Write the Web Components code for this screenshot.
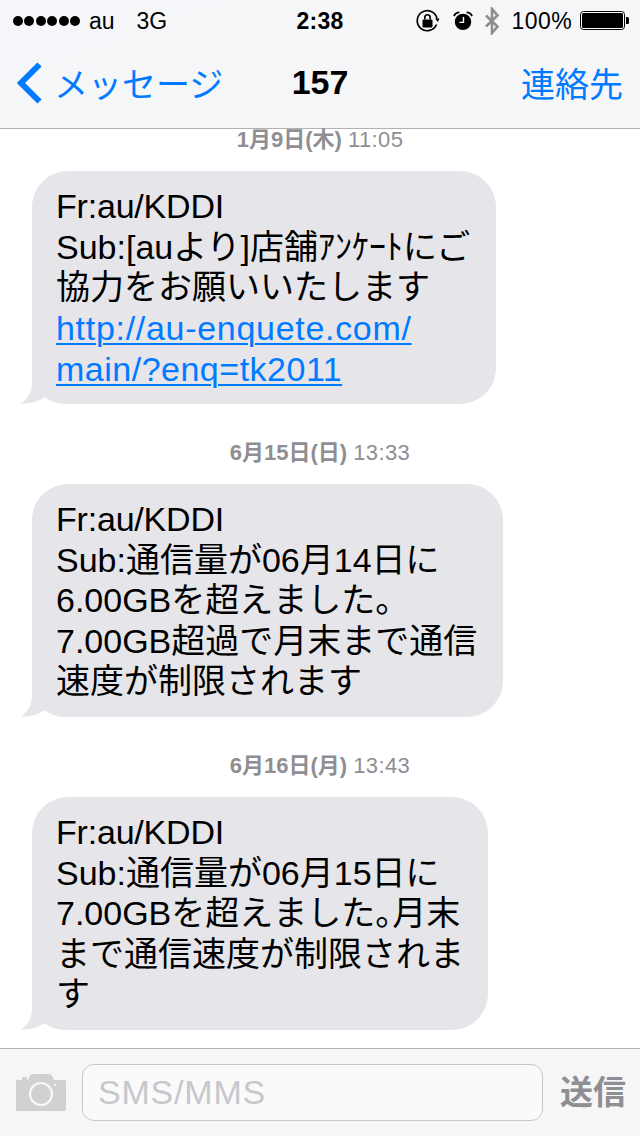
<!DOCTYPE html>
<html lang="ja">
<head>
<meta charset="utf-8">
<title>157</title>
<style>
  html, body { margin: 0; padding: 0; background: #fff; }
  body { width: 640px; height: 1136px; overflow: hidden; font-family: "Liberation Sans", "Noto Sans CJK JP", sans-serif; }
</style>
</head>
<body>
<sms-screen>
  <ios-status-bar slot="top"></ios-status-bar>
  <ios-nav-bar slot="top" back="メッセージ" heading="157" action="連絡先"></ios-nav-bar>

  <sms-stamp day="1月9日(木)" time="11:05"></sms-stamp>
  <sms-bubble style="--w:464px"><span style="letter-spacing:-.2px">Fr:au/KDDI</span><br>Sub:[auより]店舗ｱﾝｹｰﾄにご<br>協力をお願いいたします<br><a style="letter-spacing:.7px">http://au-enquete.com/</a><br><a style="letter-spacing:.5px">main/?enq=tk2011</a></sms-bubble>

  <sms-stamp day="6月15日(日)" time="13:33"></sms-stamp>
  <sms-bubble style="--w:471px"><span style="letter-spacing:-.2px">Fr:au/KDDI</span><br>Sub:通信量が06月14日に<br>6.00GBを超えました。<br>7.00GB超過で月末まで通信<br>速度が制限されます</sms-bubble>

  <sms-stamp day="6月16日(月)" time="13:43"></sms-stamp>
  <sms-bubble style="--w:456px"><span style="letter-spacing:-.2px">Fr:au/KDDI</span><br>Sub:通信量が06月15日に<br>7.00GBを超えました<span style="letter-spacing:-17px">。</span>月末<br>まで通信速度が制限されま<br>す</sms-bubble>

  <sms-composer slot="bottom" placeholder="SMS/MMS" send="送信"></sms-composer>
</sms-screen>

<script>
// page frame: bars on top, scroll area, composer at the bottom
class SmsScreen extends HTMLElement {
  constructor() {
    super();
    this.attachShadow({ mode: 'open' }).innerHTML = `
      <style>
        :host { display: flex; flex-direction: column; width: 640px; height: 1136px; }
        .top { flex: none; height: 128px; background: linear-gradient(160deg, #f5f6f9, #f7f7f8); border-bottom: 1px solid #b2b2b2; }
        .list { flex: 1; min-height: 0; margin-top: -1px; display: flex; flex-direction: column; overflow: hidden; }
      </style>
      <div class="top"><slot name="top"></slot></div>
      <div class="list"><slot></slot></div>
      <slot name="bottom"></slot>
    `;
  }
}

class IosStatusBar extends HTMLElement {
  constructor() {
    super();
    this.attachShadow({ mode: 'open' }).innerHTML = `
      <style>
        :host { display: flex; align-items: center; height: 42px; padding: 0 11px 0 13px; box-sizing: border-box; font-size: 23px; color: #000; position: relative; }
        .dots { display: flex; gap: 1.4px; margin-right: 9px; }
        .dots i { width: 10px; height: 10px; border-radius: 50%; background: #000; }
        .net { margin-left: 22px; }
        .time { position: absolute; left: 0; right: 0; text-align: center; font-weight: bold; letter-spacing: 0.2px; }
        .right { margin-left: auto; display: flex; align-items: center; }
        svg { display: block; }
      </style>
      <span class="dots"><i></i><i></i><i></i><i></i><i></i><i></i></span>
      <span>au</span><span class="net">3G</span>
      <span class="time">2:38</span>
      <span class="right">
        <svg width="24" height="24" viewBox="0 0 24 24" style="margin-right:13px">
          <path d="M20.500 15.500A10 10 0 1 1 21 9.500" fill="none" stroke="#000" stroke-width="1.700"/>
          <path d="M19 9.500l4.500 0-1.600 3.600z" fill="#000"/>
          <rect x="6.500" y="10.500" width="10" height="8" rx="1" fill="#000"/>
          <path d="M8.800 10.500V8.500a2.700 2.700 0 0 1 5.400 0v2" fill="none" stroke="#000" stroke-width="1.600"/>
        </svg>
        <svg width="20" height="20" viewBox="0 0 22 22" style="margin-right:11px">
          <circle cx="11" cy="12" r="9" fill="#000"/>
          <path d="M11.500 6.500v6H7" fill="none" stroke="#fff" stroke-width="1.600"/>
          <path d="M1 5.500Q3 1.500 7 1.500M21 5.500Q19 1.500 15 1.500" fill="none" stroke="#000" stroke-width="2"/>
        </svg>
        <svg width="16" height="28" viewBox="0 0 16 28" style="margin-right:12px">
          <path d="M2 8.500L13.500 19.500 8 26V2l5.500 6.500L2 19.500" fill="none" stroke="#8e8e8e" stroke-width="2.600"/>
        </svg>
        <span style="letter-spacing:.4px">100%</span>
        <svg width="49" height="20" viewBox="0 0 49 20" style="margin-left:8px">
          <rect x="0.500" y="0.500" width="44" height="18" rx="3" fill="#fff" stroke="#000"/>
          <rect x="2" y="2" width="41" height="15" rx="1.500" fill="#000"/>
          <path d="M46 6h1.500a1.500 1.500 0 0 1 1.500 1.500v4a1.500 1.500 0 0 1-1.500 1.500H46z" fill="#000"/>
        </svg>
      </span>
    `;
  }
}

class IosNavBar extends HTMLElement {
  constructor() {
    super();
    this.attachShadow({ mode: 'open' }).innerHTML = `
      <style>
        :host { display: flex; align-items: center; height: 86px; padding: 0 17px 6px 16px; box-sizing: border-box; position: relative; font-size: 34px; color: #007aff; }
        svg { display: block; margin: 2px 12px 0 -1px; }
        .title { position: absolute; left: 0; right: 0; text-align: center; font-weight: bold; color: #000; }
        .action { margin-left: auto; }
      </style>
      <svg width="27" height="42" viewBox="0 0 27 42"><path d="M24.500 2.500L6 21l18.500 18.500" fill="none" stroke="#007aff" stroke-width="6"/></svg>
      <span>${this.getAttribute('back')}</span>
      <span class="title">${this.getAttribute('heading')}</span>
      <span class="action">${this.getAttribute('action')}</span>
    `;
  }
}

class SmsStamp extends HTMLElement {
  constructor() {
    super();
    this.attachShadow({ mode: 'open' }).innerHTML = `
      <style>
        :host { display: block; flex: none; height: 24px; line-height: 24px; margin: 0 0 19px; text-align: center; font-size: 22px; color: #8e8e93; white-space: nowrap; }
        span { letter-spacing: .4px; }
      </style>
      <b>${this.getAttribute('day')}</b> <span>${this.getAttribute('time')}</span>
    `;
  }
}

class SmsBubble extends HTMLElement {
  constructor() {
    super();
    this.attachShadow({ mode: 'open' }).innerHTML = `
      <style>
        :host { display: block; flex: none; position: relative; box-sizing: border-box; width: var(--w); height: 233px; margin: 0 0 37px 32px; padding: 15px 0 0 24px; background: #e5e5ea; border-radius: 36px; font-size: 34px; line-height: 40.5px; color: #000; white-space: nowrap; }
        ::slotted(a) { display: inline-block; line-height: 41.5px; color: #007aff; text-decoration: underline; text-decoration-thickness: 2px; text-underline-offset: 3px; }
        .text { position: relative; }
        svg { position: absolute; left: -11px; bottom: 0; }
      </style>
      <svg width="45" height="34" viewBox="0 0 45 34"><path d="M11 0V13C11 22 6 30 0 33.500 9 34 18 31 24 27 28 31 36 34 45 34V0z" fill="#e5e5ea"/></svg>
      <div class="text"><slot></slot></div>
    `;
  }
}

class SmsComposer extends HTMLElement {
  constructor() {
    super();
    this.attachShadow({ mode: 'open' }).innerHTML = `
      <style>
        :host { display: flex; flex: none; align-items: center; height: 88px; box-sizing: border-box; padding: 0 14px 0 16px; background: #f6f6f7; border-top: 1px solid #b2b2b2; }
        svg { display: block; flex: none; margin: 0 16px 0 0; }
        .field { flex: 1; height: 57px; box-sizing: border-box; border: 1px solid #c8c8cc; border-radius: 12px; background: #fafafa; padding-left: 15px; line-height: 54px; font-size: 34px; letter-spacing: .8px; color: #c7c7cd; }
        .send { flex: none; margin: -6px 0 0 17px; font-size: 33px; font-weight: bold; color: #8e8e93; }
      </style>
      <svg width="50" height="37" viewBox="0 0 50 37">
        <path d="M1 6H6V3H11V6H12L14 1.500Q15 0 17 0H33Q35 0 36 1.500L38 6H49Q50 6 50 7V36Q50 37 49 37H1Q0 37 0 36V7Q0 6 1 6Z" fill="#d1d1d3"/>
        <circle cx="25" cy="20" r="11" fill="none" stroke="#fafafa" stroke-width="2"/>
        <circle cx="39" cy="11" r="1" fill="#fafafa"/>
      </svg>
      <span class="field">${this.getAttribute('placeholder')}</span>
      <span class="send">${this.getAttribute('send')}</span>
    `;
  }
}

customElements.define('sms-screen', SmsScreen);
customElements.define('ios-status-bar', IosStatusBar);
customElements.define('ios-nav-bar', IosNavBar);
customElements.define('sms-stamp', SmsStamp);
customElements.define('sms-bubble', SmsBubble);
customElements.define('sms-composer', SmsComposer);
</script>
</body>
</html>
